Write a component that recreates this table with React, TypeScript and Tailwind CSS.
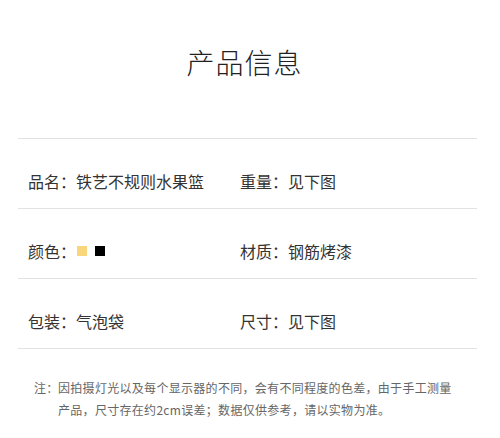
const rows = [
  { left: '品名：铁艺不规则水果篮', right: '重量：见下图' },
  { left: '颜色：', right: '材质：钢筋烤漆', swatches: true },
  { left: '包装：气泡袋', right: '尺寸：见下图' },
];

export default function App() {
  return (
    <div
      className="h-[438px] w-[500px] overflow-hidden bg-white text-[#333]"
      style={{ fontFamily: '"Noto Sans CJK SC", "Noto Sans", sans-serif' }}
    >
      <div className="flex h-[138px] items-start justify-center pt-[44px]">
        <h1 className="mr-[11px] text-[28px] font-light leading-[36px] tracking-[1px] text-[#222]">产品信息</h1>
      </div>

      <div className="ml-[18px] w-[459px] border-t-[1.5px] border-[#e2e2e2]">
        {rows.map((r) => (
          <div key={r.left} className="grid grid-cols-[222px_1fr] border-b-[1.5px] border-[#e2e2e2] pt-[33px] pb-[18px] text-[16px] leading-[18px]">
            <div className="flex items-center pl-[10px]">
              <span>{r.left}</span>
              {r.swatches && (
                <span className="ml-[1px] flex items-center gap-[8px]">
                  <span className="h-[10px] w-[10px] bg-[#f9d57c]" />
                  <span className="h-[10px] w-[10px] bg-black" />
                </span>
              )}
            </div>
            <div>{r.right}</div>
          </div>
        ))}
      </div>

      <div className="mt-[28px] flex pl-[34px] text-[12px] leading-[22px] tracking-[0.3px] text-[#666]">
        <span className="w-[24px] shrink-0">注：</span>
        <div>
          <div>因拍摄灯光以及每个显示器的不同，会有不同程度的色差，由于手工测量</div>
          <div>产品，尺寸存在约2cm误差；数据仅供参考，请以实物为准。</div>
        </div>
      </div>
    </div>
  );
}
